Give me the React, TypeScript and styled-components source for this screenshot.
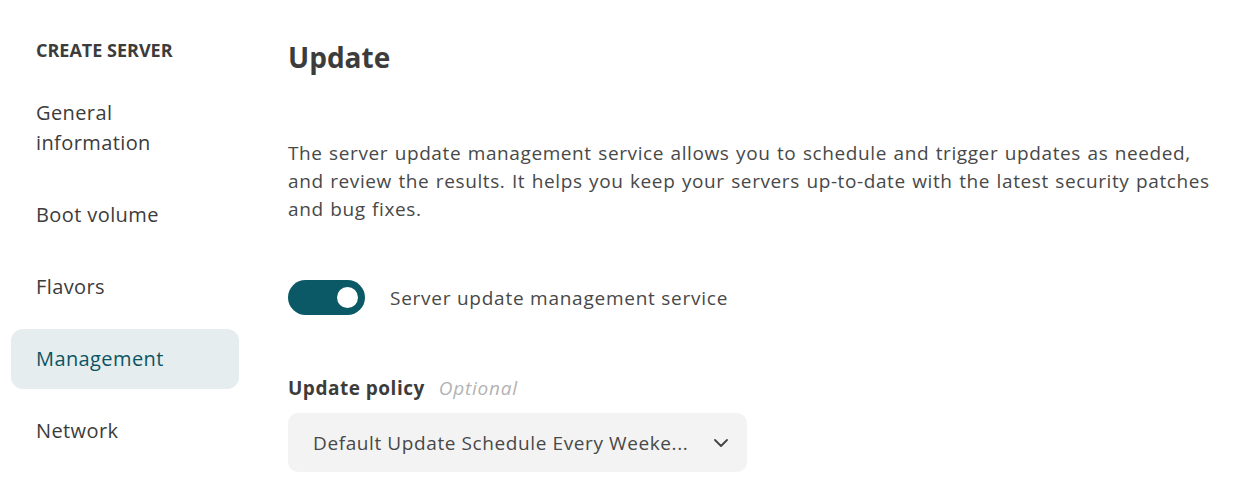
import React from 'react';
import styled, { createGlobalStyle } from 'styled-components';

const GlobalStyle = createGlobalStyle`
  html, body {
    margin: 0;
    padding: 0;
    background: #ffffff;
  }
  body {
    font-family: "Open Sans", "Noto Sans", sans-serif;
    color: #414141;
  }
`;

const Page = styled.div`
  display: flex;
  height: 492px;
  background: #ffffff;
`;

const Sidebar = styled.nav`
  width: 228px;
  margin-left: 11px;
  padding-top: 37px;
  display: flex;
  flex-direction: column;
  gap: 12px;
`;

const SidebarTitle = styled.div`
  padding-left: 25px;
  font-size: 18px;
  font-weight: 700;
  line-height: 26px;
  text-transform: uppercase;
  color: #3c3c3c;
  margin-bottom: 8px;
`;

const NavItem = styled.div<{ $active?: boolean }>`
  padding: 15px 25px;
  border-radius: 12px;
  font-size: 20px;
  line-height: 30px;
  letter-spacing: 0.4px;
  color: ${(p) => (p.$active ? '#0b5563' : '#3c3c3c')};
  background: ${(p) => (p.$active ? '#e6edee' : 'transparent')};
`;

const Main = styled.main`
  flex: 1;
  padding: 38px 0 0 49px;
  display: flex;
  flex-direction: column;
  align-items: flex-start;
`;

const Title = styled.h1`
  margin: 0;
  font-size: 28px;
  font-weight: 700;
  line-height: 38px;
  color: #3c3c3c;
`;

const Description = styled.p`
  margin: 63px 0 0;
  max-width: 935px;
  font-size: 19px;
  line-height: 28px;
  letter-spacing: 0.6px;
  word-spacing: 1px;
  color: #484848;
`;

const ToggleRow = styled.label`
  margin-top: 57px;
  display: flex;
  align-items: center;
  gap: 25px;
  font-size: 19px;
  letter-spacing: 0.75px;
  color: #484848;
`;

const Switch = styled.span<{ $on?: boolean }>`
  position: relative;
  width: 77px;
  height: 35px;
  border-radius: 18px;
  background: ${(p) => (p.$on ? '#0b5966' : '#c7c7c7')};
  flex-shrink: 0;
`;

const Knob = styled.span<{ $on?: boolean }>`
  position: absolute;
  top: 7px;
  left: ${(p) => (p.$on ? '49px' : '7px')};
  width: 21px;
  height: 21px;
  border-radius: 50%;
  background: #ffffff;
`;

const FieldLabel = styled.div`
  margin-top: 60px;
  display: flex;
  align-items: baseline;
  gap: 14px;
  font-size: 19px;
  line-height: 26px;
`;

const LabelText = styled.span`
  font-weight: 700;
  letter-spacing: 0.5px;
  color: #3c3c3c;
`;

const OptionalText = styled.span`
  font-style: italic;
  letter-spacing: 0.75px;
  color: #b3b3b3;
`;

const Select = styled.div`
  margin-top: 12px;
  width: 459px;
  height: 59px;
  box-sizing: border-box;
  padding: 0 19px 0 25px;
  border-radius: 10px;
  background: #f3f3f3;
  display: flex;
  align-items: center;
  gap: 20px;
  font-size: 19px;
  letter-spacing: 0.6px;
  color: #484848;
`;

const SelectValue = styled.span`
  flex: 1;
  white-space: nowrap;
`;

const Chevron = () => (
  <svg width="14" height="8" viewBox="0 0 14 8" fill="none">
    <path d="M1 1l6 6 6-6" stroke="#444" strokeWidth="1.8" strokeLinecap="round" strokeLinejoin="round" />
  </svg>
);

const App: React.FC = () => {
  return (
    <>
      <GlobalStyle />
      <Page>
        <Sidebar>
          <SidebarTitle>Create server</SidebarTitle>
          <NavItem>General<br />information</NavItem>
          <NavItem>Boot volume</NavItem>
          <NavItem>Flavors</NavItem>
          <NavItem $active>Management</NavItem>
          <NavItem>Network</NavItem>
        </Sidebar>
        <Main>
          <Title>Update</Title>
          <Description>
            The server update management service allows you to schedule and trigger updates as needed,
            and review the results. It helps you keep your servers up-to-date with the latest security patches
            and bug fixes.
          </Description>
          <ToggleRow>
            <Switch $on>
              <Knob $on />
            </Switch>
            Server update management service
          </ToggleRow>
          <FieldLabel>
            <LabelText>Update policy</LabelText>
            <OptionalText>Optional</OptionalText>
          </FieldLabel>
          <Select>
            <SelectValue>Default Update Schedule Every Weeke...</SelectValue>
            <Chevron />
          </Select>
        </Main>
      </Page>
    </>
  );
};

export default App;
